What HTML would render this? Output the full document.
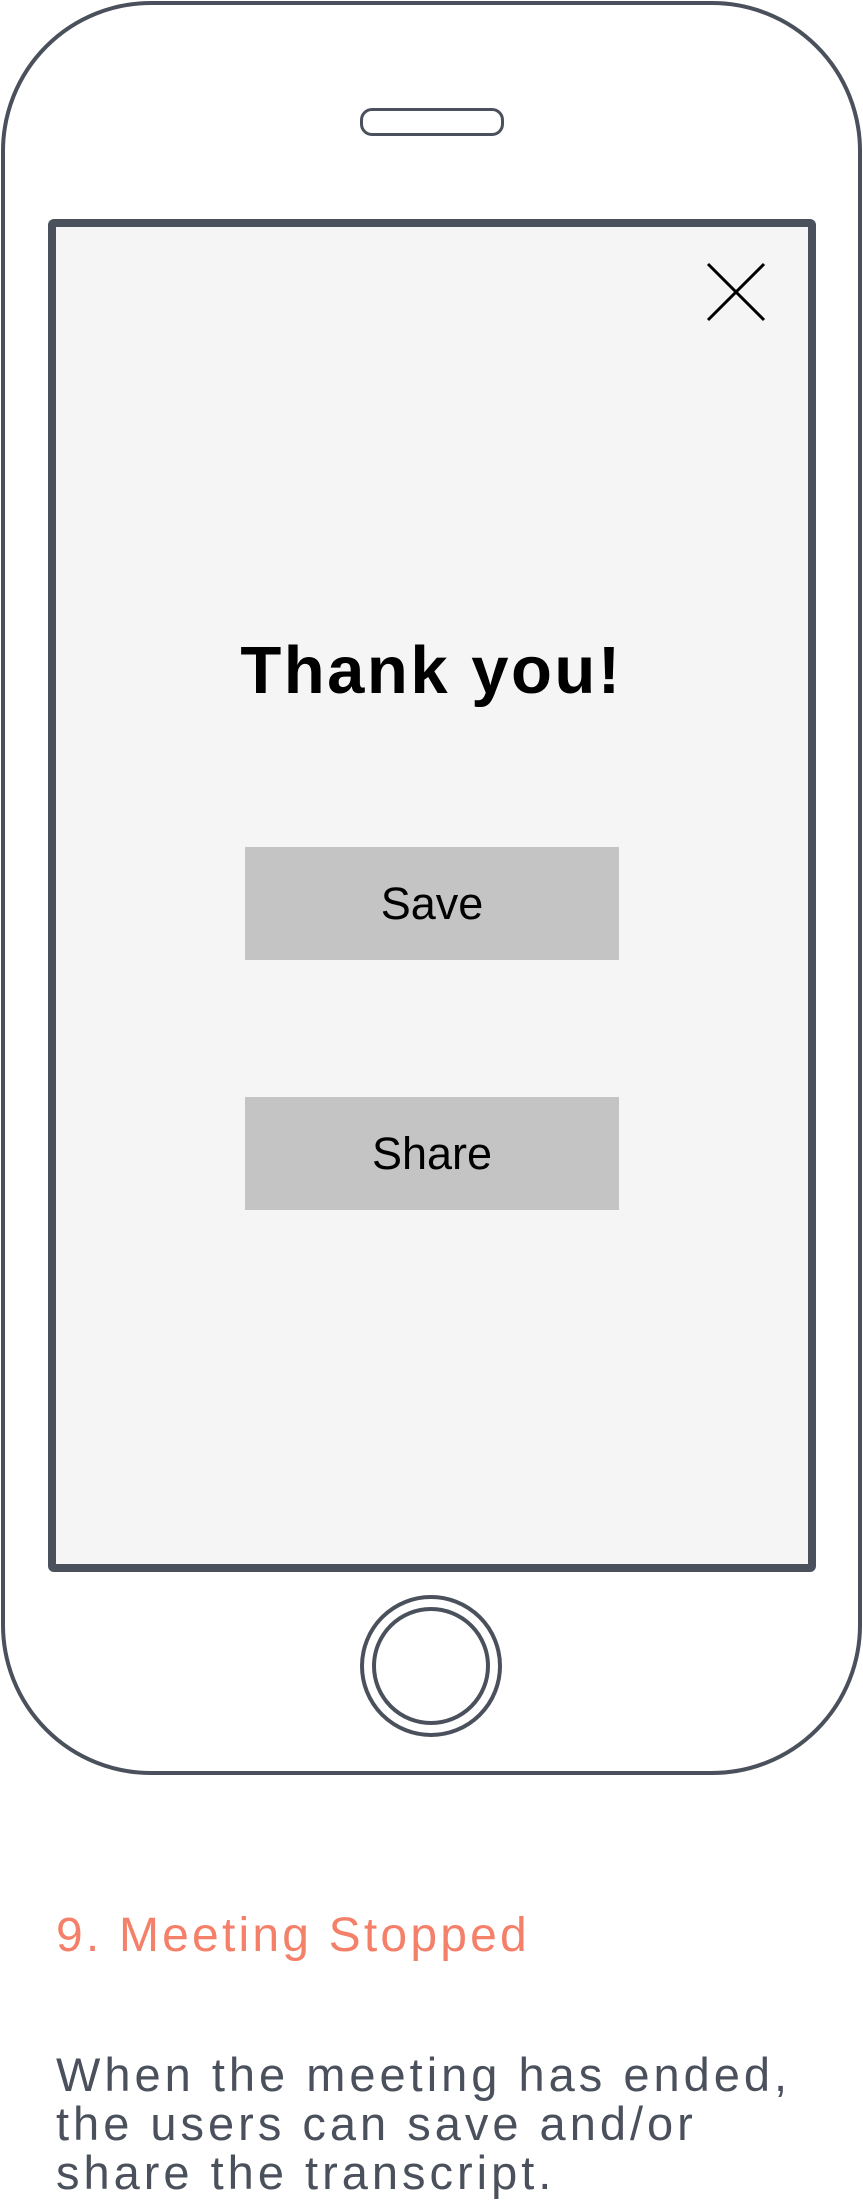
<!DOCTYPE html>
<html><head><style>
body{margin:0;width:863px;height:2204px;background:#fff;position:relative;overflow:hidden;font-family:"Liberation Sans",sans-serif}
.a{position:absolute}
.phone{left:1px;top:1px;width:853px;height:1766px;border:4px solid #4b515c;border-radius:150px}
.spk{left:360px;top:108px;width:138px;height:22px;border:3px solid #4b515c;border-radius:12px}
.scr{left:48px;top:219px;width:752px;height:1337px;border:8px solid #4b515c;border-radius:6px;background:#f5f5f5}
.btn{left:245px;width:374px;height:113px;background:#c4c4c4;color:#000;font-size:45px;text-align:center;line-height:113px}
.ttl{left:0;width:863px;text-align:center;top:632px;font-size:67px;font-weight:bold;color:#000;letter-spacing:2.5px}
.h1{left:56px;top:1908px;font-size:48px;color:#f4806a;letter-spacing:3.2px}
.p{left:56px;top:2050px;font-size:47px;line-height:49px;color:#4b515c;width:840px;letter-spacing:4px}
</style></head><body>
<div class="a phone"></div>
<div class="a spk"></div>
<div class="a scr"></div>
<svg class="a" style="left:700px;top:258px" width="72" height="70"><path d="M8 6L64 62M64 6L8 62" stroke="#000" stroke-width="3"/></svg>
<div class="a ttl">Thank you!</div>
<div class="a btn" style="top:847px">Save</div>
<div class="a btn" style="top:1097px">Share</div>
<svg class="a" style="left:355px;top:1590px" width="152" height="152"><circle cx="76" cy="76" r="69" fill="none" stroke="#4b515c" stroke-width="4"/><circle cx="76" cy="76" r="57" fill="none" stroke="#4b515c" stroke-width="4"/></svg>
<div class="a h1">9. Meeting Stopped</div>
<div class="a p">When the meeting has ended,<br>the users can save and/or<br>share the transcript.</div>
</body></html>
